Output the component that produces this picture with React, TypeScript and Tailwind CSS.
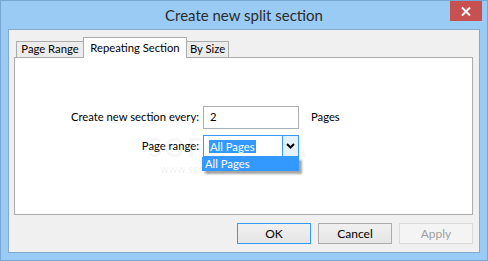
import { useState } from 'react'

const font = { fontFamily: 'Lato, "Open Sans", sans-serif' }

function Chevron() {
  return (
    <svg width="9" height="6" viewBox="0 0 9 6" className="block">
      <path d="M1 1 L4.5 4.5 L8 1" fill="none" stroke="#000" strokeWidth="2" />
    </svg>
  )
}

export default function App() {
  const [tab] = useState('repeating')
  const [every] = useState('2')

  return (
    <div
      className="w-[488px] h-[261px] flex flex-col bg-[#99cbf5] border border-[#76a7d4] px-[7px] pb-[7px] text-[11.25px] text-black select-none"
      style={font}
    >
      {/* title bar */}
      <div className="relative h-[29px] flex items-center justify-center">
        <span className="text-[15px] text-[#2b2b2b] mt-[1px]">Create new split section</span>
        <div className="absolute top-0 right-[-2px] w-[32px] h-[20px] bg-[#c75050] flex items-center justify-center">
          <svg width="10" height="9" viewBox="0 0 10 9">
            <path d="M1 0.5 L9 8.5 M9 0.5 L1 8.5" stroke="#fff" strokeWidth="2" />
          </svg>
        </div>
      </div>

      {/* client area */}
      <div className="flex-1 bg-[#f0f0f0] border border-[#83a9cc] pt-[7px] pb-[8px] flex flex-col">
        <div className="flex items-end pl-[7px] h-[20px]">
          <div className="h-[16px] w-[68px] border border-b-0 border-[#acacac] bg-[#ececec] flex items-center justify-center">
            Page Range
          </div>
          <div className="relative z-10 h-[21px] mb-[-1px] w-[104px] ml-[-1px] border border-b-0 border-[#acacac] bg-white flex items-start justify-center pt-[2px]">
            {tab === 'repeating' ? 'Repeating Section' : ''}
          </div>
          <div className="h-[16px] w-[43px] ml-[-1px] border border-b-0 border-[#acacac] bg-[#ececec] flex items-center justify-center">
            By Size
          </div>
        </div>

        <div className="relative ml-[5px] w-[459px] h-[158px] bg-white border border-[#acacac] pt-[48px]">
          <div className="absolute left-[133px] top-[70px] text-[26px] font-bold tracking-[2px] text-black/[0.05] pointer-events-none">
            SOFTPEDIA
          </div>
          <div className="absolute left-[145px] top-[103px] text-[11px] text-black/[0.08] pointer-events-none">
            www.softpedia.com
          </div>
          <div className="relative flex items-center h-[23px]">
            <div className="w-[186px] text-right pr-[2px]">Create new section every:</div>
            <div className="ml-[2px] w-[96px] h-[23px] border border-[#abadb3] flex items-center px-[6px]">{every}</div>
            <div className="ml-[12px]">Pages</div>
          </div>
          <div className="relative flex items-center h-[22px] mt-[6px]">
            <div className="w-[186px] text-right pr-[2px]">Page range:</div>
            <div className="relative ml-[2px] w-[96px] h-[22px] border border-[#3399ff] flex bg-white">
              <div className="flex-1 flex items-center pl-[5px]">
                <span className="bg-[#3399ff] text-white leading-[13px] px-[1px]">All Pages</span>
              </div>
              <div className="w-[16px] bg-[#e5f1fb] border-l border-[#3399ff] flex items-center justify-center">
                <Chevron />
              </div>
            </div>
          </div>
          <div className="relative ml-[187px] w-[97px] h-[14px] bg-[#3399ff] text-white flex items-center pl-[3px] shadow-[3px_3px_2px_rgba(0,0,0,0.35)]">
            All Pages
          </div>
        </div>

        <div className="flex justify-end gap-[7px] pr-[6px] mt-[8px]">
          <button className="w-[74px] h-[21px] border border-[#3399ff] bg-gradient-to-b from-[#f0f0f0] to-[#e5e5e5] text-[12px]">
            OK
          </button>
          <button className="w-[74px] h-[21px] border border-[#acacac] bg-gradient-to-b from-[#f0f0f0] to-[#e5e5e5] text-[12px]">
            Cancel
          </button>
          <button className="w-[74px] h-[21px] border border-[#d9d9d9] bg-[#f4f4f4] text-[#a0a0a0] text-[12px]">
            Apply
          </button>
        </div>
      </div>
    </div>
  )
}
